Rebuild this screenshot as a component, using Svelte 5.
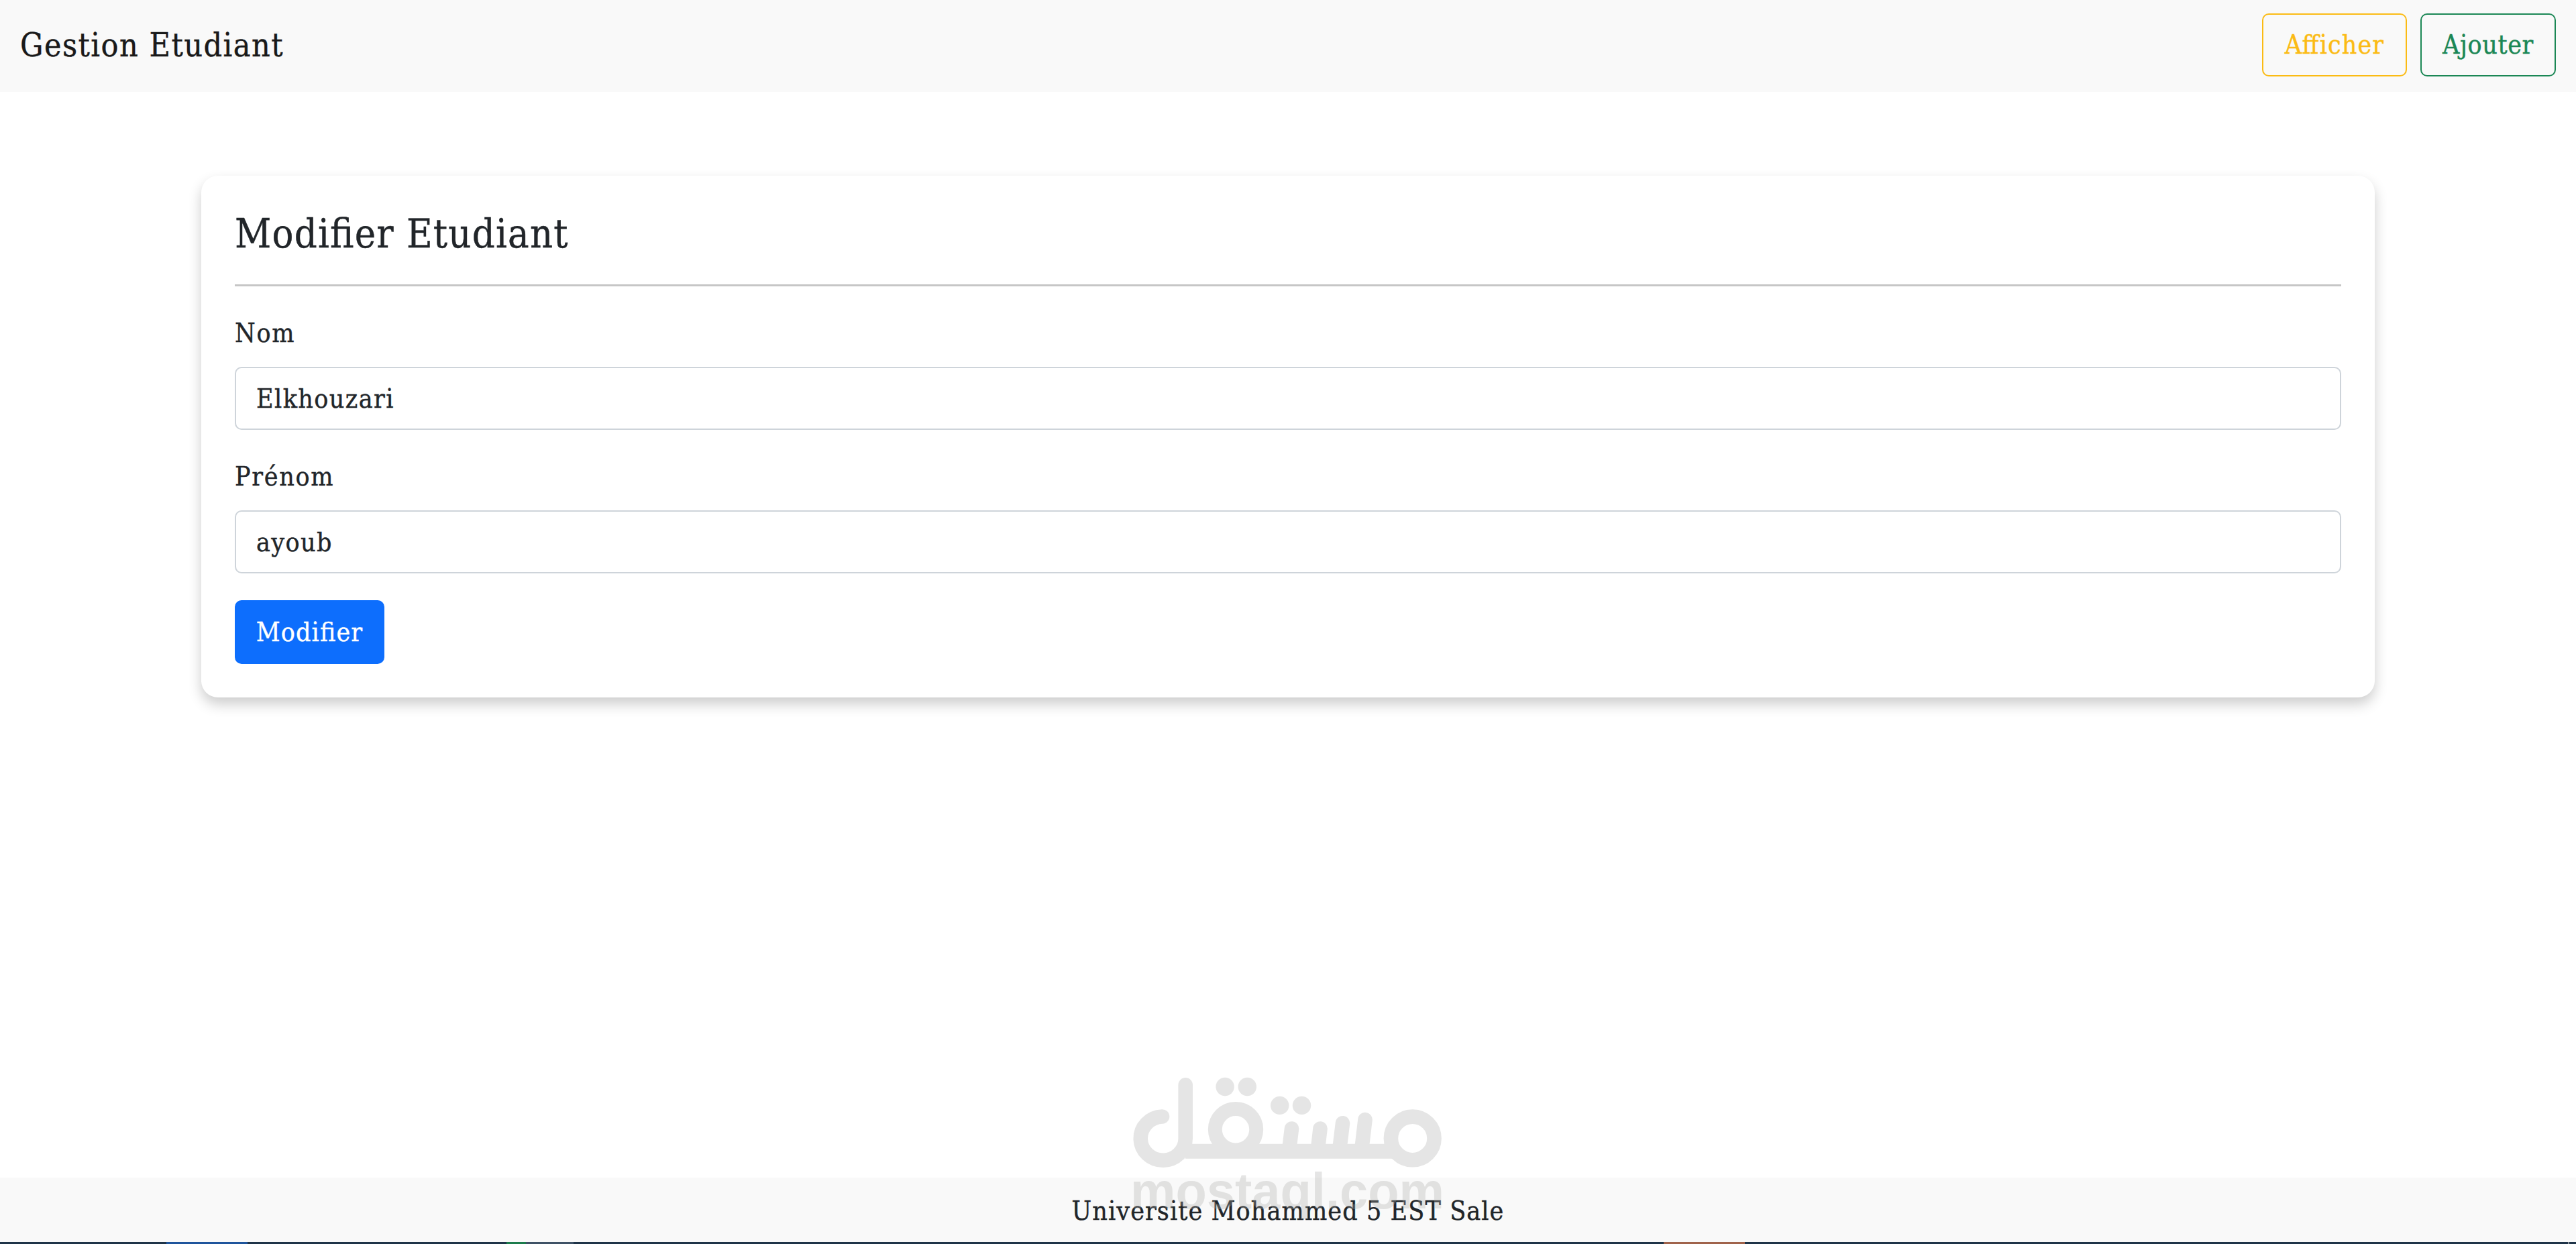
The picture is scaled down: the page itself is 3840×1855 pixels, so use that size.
<script>
  let nom = $state('Elkhouzari');
  let prenom = $state('ayoub');
</script>

<div class="page">
  <nav class="navbar">
    <a class="brand" href="#accueil">Gestion Etudiant</a>
    <div class="actions">
      <button class="btn warning" type="button"><span>Afficher</span></button>
      <button class="btn success" type="button"><span>Ajouter</span></button>
    </div>
  </nav>

  <main>
    <form class="card" onsubmit={(e) => e.preventDefault()}>
      <h4>Modifier Etudiant</h4>
      <hr />
      <div class="field">
        <label for="nom">Nom</label>
        <input id="nom" type="text" spellcheck="false" bind:value={nom} />
      </div>
      <div class="field">
        <label for="prenom">Prénom</label>
        <input id="prenom" type="text" spellcheck="false" bind:value={prenom} />
      </div>
      <button class="btn primary" type="submit"><span>Modifier</span></button>
    </form>
  </main>

  <footer><span>Universite Mohammed 5 EST Sale</span></footer>
  <div class="taskbar">
    <i class="blue"></i><i class="green"></i><i class="gray"></i><i class="orange"></i><i class="tick"></i>
  </div>

  <svg class="watermark" viewBox="0 0 560 285" width="560" height="285" aria-hidden="true">
    <g fill="none" stroke="#acacaa" stroke-width="21.6" stroke-linecap="round">
      <path d="M92.5 95A33.5 32.6 0 1 0 127.2 127.4V47.8" />
      <path d="M127 146.7H436" stroke-width="22" stroke-linecap="butt" />
      <circle cx="202" cy="114.2" r="30.7" stroke-width="20.9" />
      <path d="M285.5 113L281.5 146M328 113L324.2 146M361.5 104.8L356.5 146M395 99.6L389.5 146" />
      <circle cx="465.7" cy="127.4" r="32.3" />
    </g>
    <g fill="#acacaa">
      <circle cx="186.1" cy="50.5" r="13.7" />
      <circle cx="219.3" cy="50.5" r="13.7" />
      <circle cx="267.7" cy="78.4" r="13.7" />
      <circle cx="300.5" cy="78.4" r="13.7" />
      <text x="45" y="232" textLength="468" lengthAdjust="spacingAndGlyphs">mostaql.com</text>
    </g>
  </svg>
</div>

<style>
  :global(body) {
    margin: 0;
    background: #fff;
  }
  .page {
    position: relative;
    display: flex;
    flex-direction: column;
    height: 1855px;
    overflow: hidden;
    color: #212529;
    font-family: 'Roboto Slab', 'DejaVu Serif Condensed', 'DejaVu Serif', serif;
    font-stretch: condensed;
    font-feature-settings: 'liga' 1;
    font-size: 39px;
    line-height: 60px;
    -webkit-text-stroke: 0.4px;
  }
  .navbar {
    display: flex;
    align-items: center;
    justify-content: space-between;
    box-sizing: border-box;
    height: 137px;
    padding: 0 30px 3px;
    background: #f9f9f9;
  }
  .brand {
    color: #191919;
    font-size: 48px;
    letter-spacing: 1.45px;
    text-decoration: none;
    white-space: nowrap;
  }
  .actions {
    display: flex;
    gap: 20px;
  }
  .btn {
    display: flex;
    align-items: center;
    justify-content: center;
    box-sizing: border-box;
    height: 94px;
    padding: 0;
    border: 2px solid;
    border-radius: 10px;
    background: transparent;
    font: inherit;
    font-feature-settings: inherit;
    letter-spacing: 1.1px;
    white-space: nowrap;
  }
  .warning {
    width: 216px;
    color: #fbbb14;
  }
  .success {
    width: 202px;
    color: #1b8755;
    letter-spacing: 0.6px;
  }
  .primary {
    width: 223px;
    height: 95px;
    border-color: #0d6efd;
    background: #0d6efd;
    color: #fff;
  }
  main {
    flex: 1;
    padding: 125px 300px 0;
  }
  .card {
    box-sizing: border-box;
    height: 778px;
    padding: 50px;
    border-radius: 25px;
    background: #fff;
    box-shadow: 0 10px 20px rgba(0, 0, 0, 0.2);
  }
  h4 {
    margin: 0;
    font-size: 59px;
    font-weight: 400;
    letter-spacing: 1.2px;
    line-height: 74px;
    white-space: nowrap;
  }
  hr {
    height: 3px;
    margin: 38px 0 40px;
    border: 0;
    background: #c6c6c6;
  }
  .field {
    display: flex;
    flex-direction: column;
    align-items: flex-start;
    gap: 20px;
    margin-bottom: 40px;
    letter-spacing: 1.7px;
  }
  input {
    box-sizing: border-box;
    width: 100%;
    height: 94px;
    padding: 0 30px;
    border: 2px solid #ced4da;
    border-radius: 10px;
    outline: 0;
    background: #fff;
    color: inherit;
    font: inherit;
    letter-spacing: 1.4px;
  }
  footer {
    box-sizing: border-box;
    height: 96px;
    padding-top: 20px;
    background: #f9f9f9;
    letter-spacing: 1.1px;
    text-align: center;
    white-space: nowrap;
  }
  .taskbar {
    display: flex;
    height: 3px;
    background: #1f3448;
  }
  .blue {
    width: 121px;
    margin-left: 248px;
    background: #1f559c;
  }
  .green {
    width: 29px;
    margin-left: 386px;
    background: #1c7c4c;
  }
  .gray {
    width: 71px;
    background: #3f5266;
  }
  .orange {
    width: 121px;
    margin-left: 1625px;
    background: #a0634b;
  }
  .tick {
    width: 2px;
    margin-left: 1227px;
    background: #8d959d;
  }
  .watermark {
    position: absolute;
    top: 1570px;
    left: 1640px;
    opacity: 0.3;
    pointer-events: none;
    -webkit-text-stroke: 0;
  }
  .watermark text {
    font: 700 76px 'Liberation Sans', Arial, sans-serif;
    letter-spacing: 0;
  }
</style>
